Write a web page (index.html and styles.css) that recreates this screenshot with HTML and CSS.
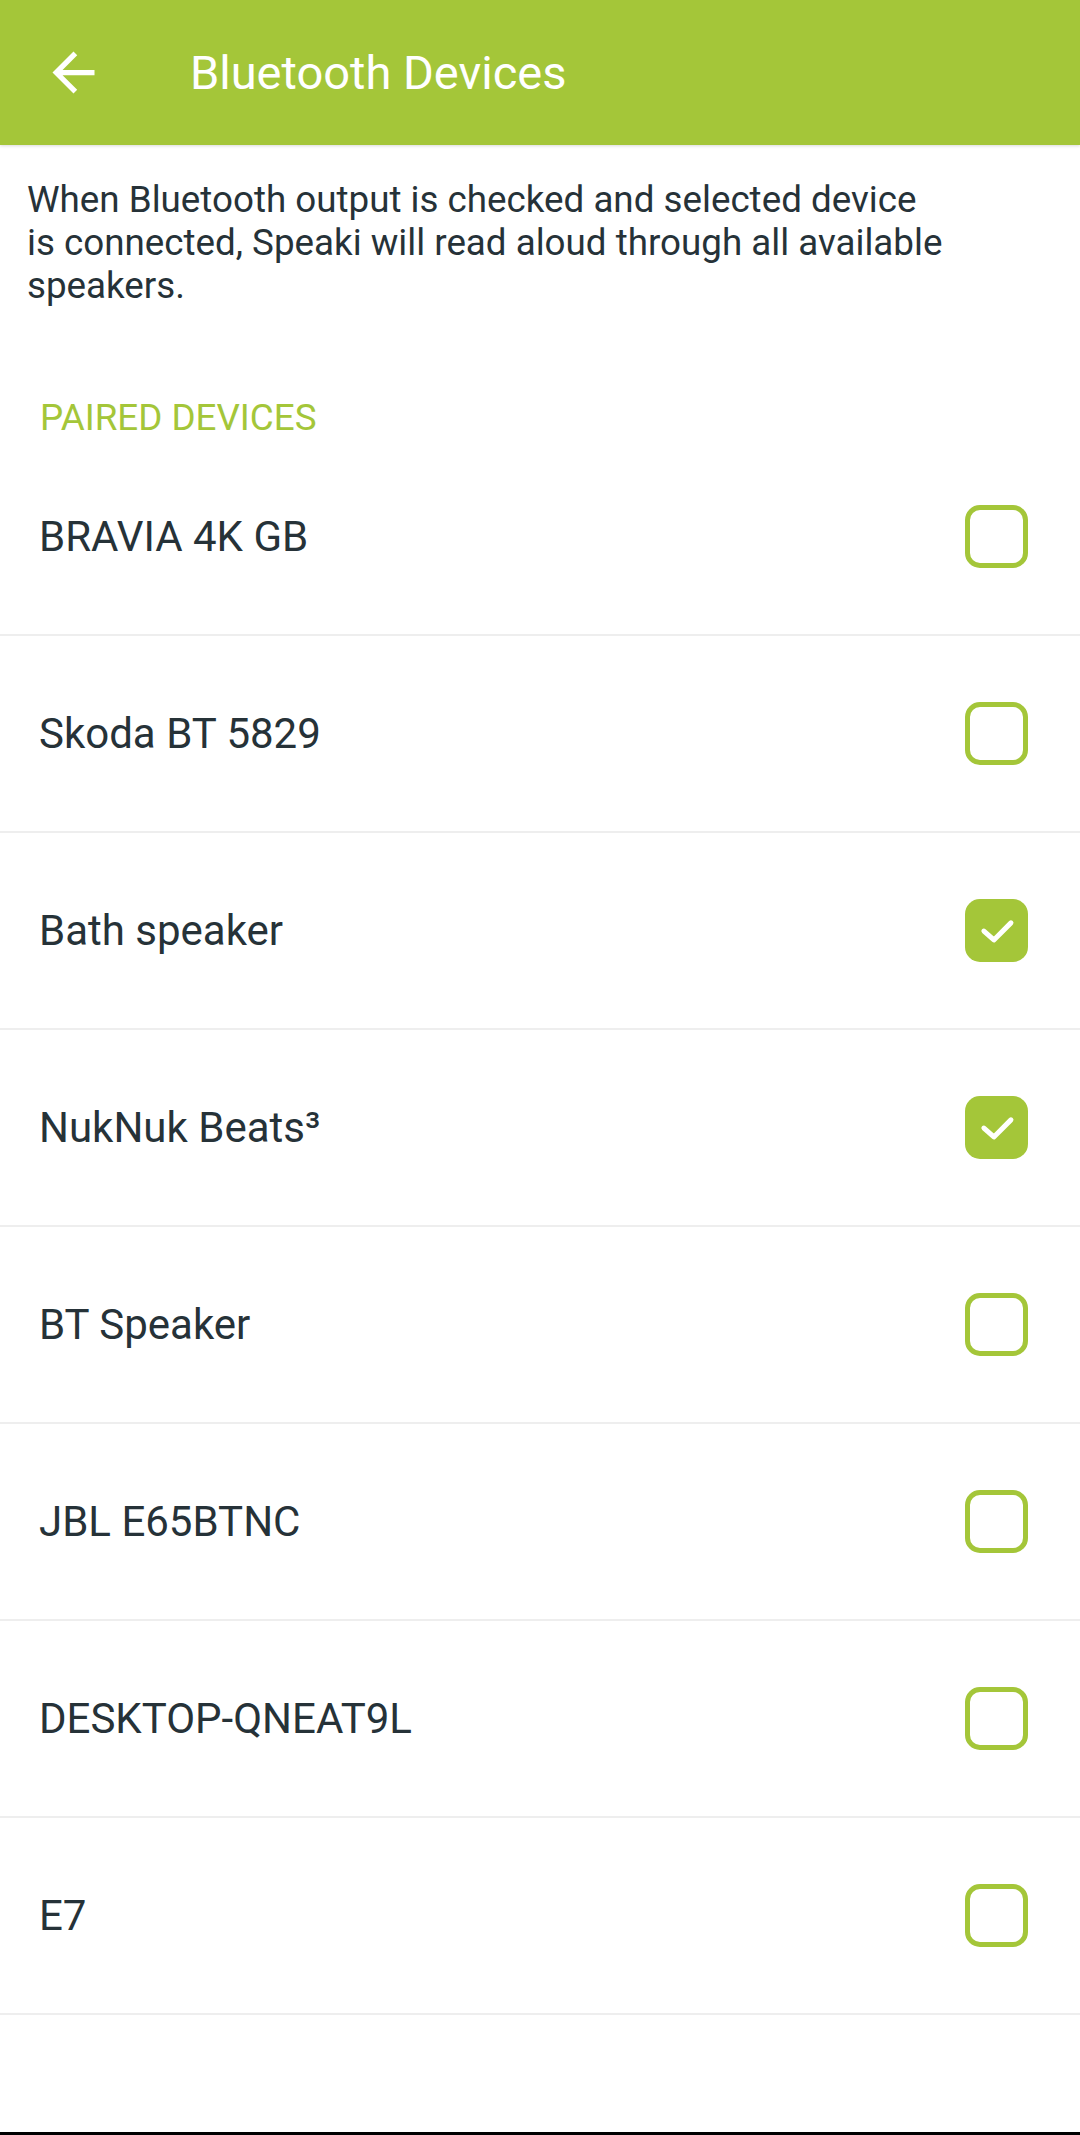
FILE: index.html
```html
<!DOCTYPE html>
<html lang="en">
<head>
  <meta charset="UTF-8">
  <title>Bluetooth Devices</title>
  <link rel="stylesheet" href="styles.css">
</head>
<body>
  <div class="page">
    <header class="toolbar">
      <svg class="back" viewBox="0 0 24 24" width="63" height="63">
        <path d="M20 11H7.83l5.59-5.59L12 4l-8 8 8 8 1.41-1.41L7.83 13H20v-2z" fill="#ffffff"/>
      </svg>
      <h1>Bluetooth Devices</h1>
    </header>

    <p class="intro">
      When Bluetooth output is checked and selected device<br>
      is connected, Speaki will read aloud through all available<br>
      speakers.
    </p>

    <h2 class="section-title">PAIRED DEVICES</h2>

    <ul class="devices">
      <li class="device"><span>BRAVIA 4K GB</span><span class="check"></span></li>
      <li class="device"><span>Skoda BT 5829</span><span class="check"></span></li>
      <li class="device"><span>Bath speaker</span><span class="check on"><svg viewBox="0 0 24 24" width="63" height="63"><path d="M7.2 12.2 11 15.6 17.5 9.1" fill="none" stroke="#ffffff" stroke-width="1.9" stroke-linecap="round" stroke-linejoin="round"/></svg></span></li>
      <li class="device"><span>NukNuk Beats³</span><span class="check on"><svg viewBox="0 0 24 24" width="63" height="63"><path d="M7.2 12.2 11 15.6 17.5 9.1" fill="none" stroke="#ffffff" stroke-width="1.9" stroke-linecap="round" stroke-linejoin="round"/></svg></span></li>
      <li class="device"><span>BT Speaker</span><span class="check"></span></li>
      <li class="device"><span>JBL E65BTNC</span><span class="check"></span></li>
      <li class="device"><span>DESKTOP-QNEAT9L</span><span class="check"></span></li>
      <li class="device"><span>E7</span><span class="check"></span></li>
    </ul>

    <div class="bottom-edge"></div>
  </div>
</body>
</html>
```

FILE: styles.css
```css
body {
  margin: 0;
  font-family: Roboto, "Noto Sans", sans-serif;
  background-color: #ffffff;
  color: #263238;
}

.page {
  min-height: 100vh;
  display: flex;
  flex-direction: column;
}

.toolbar {
  height: 145px;
  background-color: #a4c639;
  display: flex;
  align-items: center;
  box-shadow: 0 1px 3px rgba(0, 0, 0, 0.15);
}

.back {
  margin-left: 42px;
  flex-shrink: 0;
}

.toolbar h1 {
  margin: 0 0 0 85px;
  font-size: 47px;
  font-weight: normal;
  color: #ffffff;
}

.intro {
  margin: 0;
  padding: 33px 28px 0 27px;
  font-size: 36.75px;
  line-height: 43px;
}

.section-title {
  margin: 89px 0 0 0;
  padding-left: 40px;
  font-size: 36.75px;
  line-height: 43px;
  font-weight: normal;
  color: #a4c639;
}

.devices {
  list-style: none;
  margin: 0;
  padding: 0;
}

.device {
  height: 195px;
  border-bottom: 2px solid #eeeeee;
  display: flex;
  align-items: center;
  justify-content: space-between;
  padding: 0 52px 0 39px;
  font-size: 42px;
}

.check {
  width: 63px;
  height: 63px;
  box-sizing: border-box;
  border: 5px solid #a4c639;
  border-radius: 15px;
  display: flex;
  align-items: center;
  justify-content: center;
  overflow: hidden;
}

.check.on {
  border: none;
  background-color: #a4c639;
}

.bottom-edge {
  margin-top: auto;
  height: 3px;
  background-color: #000000;
}
```
